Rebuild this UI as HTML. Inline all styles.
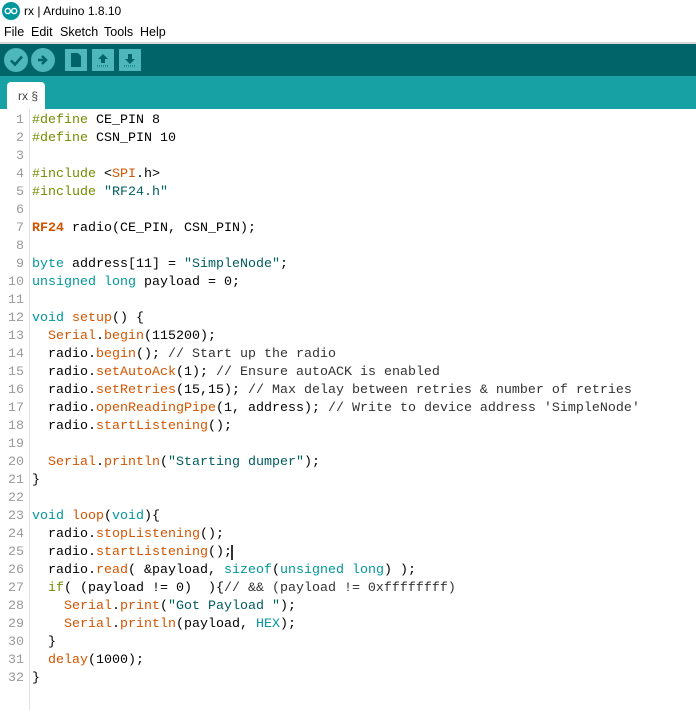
<!DOCTYPE html>
<html><head><style>
body{margin:0;width:696px;height:710px;background:#fff;overflow:hidden;font-family:"Liberation Sans",sans-serif;position:relative}
.title{position:absolute;top:0;left:0;width:696px;height:22px;font-size:12px}
.title span{position:absolute;left:24px;top:4px;color:#000}
.menu{position:absolute;top:22px;left:0;height:20px;font-size:12.5px}
.menu span{position:absolute;top:3px}
.sep{position:absolute;top:42px;left:0;width:696px;height:2px;background:#d9d9d9}
.tb{position:absolute;top:44px;left:0;width:696px;height:32px;background:#006468}
.circ{position:absolute;top:4px;width:24px;height:24px;border-radius:50%;background:#4db7bb}
.sq{position:absolute;top:5px;width:22px;height:22px;background:#4db7bb}
.tabs{position:absolute;top:76px;left:0;width:696px;height:33px;background:#17a1a5}
.tab{position:absolute;left:7px;top:6px;width:38px;height:27px;background:#fff;border-radius:4px 4px 0 0;font-size:12px;color:#444}
.gut{position:absolute;top:109px;left:29px;width:1px;height:601px;background:#e0e0e0}
.code{position:absolute;top:112px;left:0;font-family:"Liberation Mono",monospace;font-size:13.33px;line-height:18px;color:#000;white-space:pre;margin:0}
.n{display:inline-block;width:24px;text-align:right;color:#9a9a9a;margin-right:8px}
.d{color:#728e00}.k{color:#00979c}.f{color:#d35400}.b{color:#d35400}.bb{color:#d35400;font-weight:bold}.s{color:#005c5f}.c{color:#333}
</style></head><body>
<div class="title"><svg style="position:absolute;left:2px;top:2px" width="18" height="18"><circle cx="9" cy="9" r="9" fill="#00979c"/><circle cx="5.8" cy="9" r="2.6" fill="none" stroke="#fff" stroke-width="1.4"/><circle cx="12.2" cy="9" r="2.6" fill="none" stroke="#fff" stroke-width="1.4"/></svg><span>rx | Arduino 1.8.10</span></div>
<div class="menu"><span style="left:4px">File</span><span style="left:31px">Edit</span><span style="left:60px">Sketch</span><span style="left:104px">Tools</span><span style="left:140px">Help</span></div>
<div class="sep"></div>
<div class="tb">
<div class="circ" style="left:4px"><svg width="24" height="24"><path d="M7 12.5l4 4 7-8" stroke="#006468" stroke-width="2.5" fill="none"/></svg></div>
<div class="circ" style="left:31px"><svg width="24" height="24"><path d="M7 12h7M11 8l4 4-4 4" stroke="#006468" stroke-width="2.5" fill="none"/></svg></div>
<div class="sq" style="left:65px"><svg width="22" height="22"><path d="M6 4h7l3 3v11H6z" fill="#006468"/></svg></div>
<div class="sq" style="left:92px"><svg width="22" height="22"><path d="M11 5l5 5h-3v4h-4v-4h-3z" fill="#006468"/><path d="M5 17h12" stroke="#006468" stroke-dasharray="1 1"/></svg></div>
<div class="sq" style="left:119px"><svg width="22" height="22"><path d="M11 15l5-5h-3V5h-4v5h-3z" fill="#006468"/><path d="M5 17h12" stroke="#006468" stroke-dasharray="1 1"/></svg></div>
</div>
<div class="tabs"><div class="tab"><span style="position:absolute;left:11px;top:7px">rx §</span></div></div>
<div class="gut"></div>
<pre class="code"><span class="n">1</span><span class="d">#define</span> CE_PIN 8
<span class="n">2</span><span class="d">#define</span> CSN_PIN 10
<span class="n">3</span>
<span class="n">4</span><span class="d">#include</span> &lt;<span class="b">SPI</span>.h&gt;
<span class="n">5</span><span class="d">#include</span> <span class="s">"RF24.h"</span>
<span class="n">6</span>
<span class="n">7</span><span class="bb">RF24</span> radio(CE_PIN, CSN_PIN);
<span class="n">8</span>
<span class="n">9</span><span class="k">byte</span> address[11] = <span class="s">"SimpleNode"</span>;
<span class="n">10</span><span class="k">unsigned</span> <span class="k">long</span> payload = 0;
<span class="n">11</span>
<span class="n">12</span><span class="k">void</span> <span class="f">setup</span>() {
<span class="n">13</span>  <span class="b">Serial</span>.<span class="f">begin</span>(115200);
<span class="n">14</span>  radio.<span class="f">begin</span>(); <span class="c">// Start up the radio</span>
<span class="n">15</span>  radio.<span class="f">setAutoAck</span>(1); <span class="c">// Ensure autoACK is enabled</span>
<span class="n">16</span>  radio.<span class="f">setRetries</span>(15,15); <span class="c">// Max delay between retries &amp; number of retries</span>
<span class="n">17</span>  radio.<span class="f">openReadingPipe</span>(1, address); <span class="c">// Write to device address 'SimpleNode'</span>
<span class="n">18</span>  radio.<span class="f">startListening</span>();
<span class="n">19</span>
<span class="n">20</span>  <span class="b">Serial</span>.<span class="f">println</span>(<span class="s">"Starting dumper"</span>);
<span class="n">21</span>}
<span class="n">22</span>
<span class="n">23</span><span class="k">void</span> <span class="f">loop</span>(<span class="k">void</span>){
<span class="n">24</span>  radio.<span class="f">stopListening</span>();
<span class="n">25</span>  radio.<span class="f">startListening</span>();<span style="border-left:2px solid #333;margin-left:-1px"></span>
<span class="n">26</span>  radio.<span class="f">read</span>( &amp;payload, <span class="k">sizeof</span>(<span class="k">unsigned</span> <span class="k">long</span>) );
<span class="n">27</span>  <span class="d">if</span>( (payload != 0)  ){<span class="c">// &amp;&amp; (payload != 0xffffffff)</span>
<span class="n">28</span>    <span class="b">Serial</span>.<span class="f">print</span>(<span class="s">"Got Payload "</span>);
<span class="n">29</span>    <span class="b">Serial</span>.<span class="f">println</span>(payload, <span class="k">HEX</span>);
<span class="n">30</span>  }
<span class="n">31</span>  <span class="f">delay</span>(1000);
<span class="n">32</span>}
</pre>
</body></html>
